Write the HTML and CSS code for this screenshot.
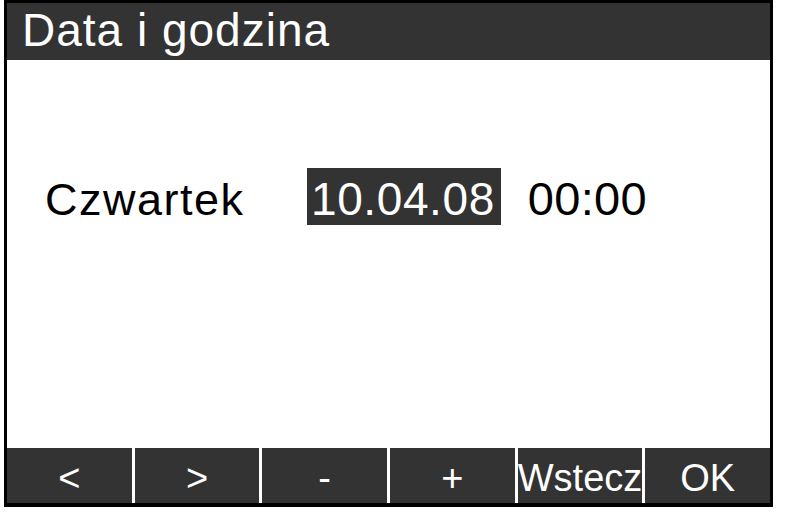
FILE: index.html
```html
<!DOCTYPE html>
<html lang="pl">
<head>
<meta charset="utf-8">
<title>Data i godzina</title>
<link rel="stylesheet" href="styles.css">
</head>
<body>
<div class="screen">
  <div class="header">Data i godzina</div>
  <div class="main">
    <span class="day">Czwartek</span>
    <span class="date">10.04.08</span>
    <span class="time">00:00</span>
  </div>
  <div class="footer">
    <div class="key">&lt;</div>
    <div class="key">&gt;</div>
    <div class="key">-</div>
    <div class="key">+</div>
    <div class="key">Wstecz</div>
    <div class="key">OK</div>
  </div>
</div>
</body>
</html>
```
FILE: styles.css
```css
html, body {
  margin: 0;
  padding: 0;
  background: #fff;
}
body {
  font-family: "Liberation Sans", Arial, sans-serif;
}
.screen {
  box-sizing: border-box;
  margin-left: 4px;
  width: 769px;
  height: 507px;
  border: 3px solid #000;
  border-bottom-width: 4px;
  display: flex;
  flex-direction: column;
  background: #fff;
}
.header {
  height: 57px;
  background: #333333;
  color: #fff;
  font-size: 46px;
  letter-spacing: 1px;
  line-height: 55px;
  padding-left: 15px;
  white-space: nowrap;
}
.main {
  flex: 1;
  display: flex;
  align-items: baseline;
  padding-top: 108px;
  padding-left: 38px;
  color: #000;
}
.day {
  width: 262px;
  font-size: 45px;
  letter-spacing: 1.5px;
}
.date {
  display: inline-block;
  background: #333333;
  color: #fff;
  font-size: 46px;
  letter-spacing: 0.6px;
  line-height: 52px;
  padding: 5px 6px 0 4px;
}
.time {
  margin-left: 27px;
  font-size: 47px;
  letter-spacing: 0.3px;
}
.footer {
  height: 55px;
  display: grid;
  grid-template-columns: repeat(6, 1fr);
  column-gap: 3px;
  background: #fff;
}
.key {
  background: #333333;
  color: #fff;
  font-size: 38px;
  line-height: 49px;
  padding-top: 6px;
  text-align: center;
  overflow: hidden;
  white-space: nowrap;
}
```
